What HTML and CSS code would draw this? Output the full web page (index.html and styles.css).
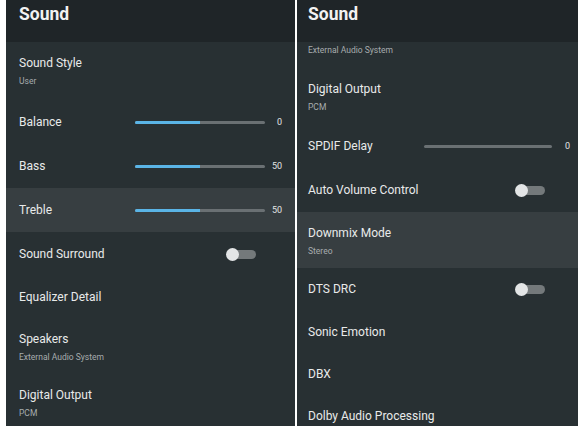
FILE: index.html
```html
<!DOCTYPE html>
<html>
<head>
<meta charset="utf-8">
<link rel="stylesheet" href="styles.css">
</head>
<body>
<div class="screen">
  <section class="panel left">
    <header class="head">Sound</header>
    <div class="list">
      <div class="items">
        <div class="row two s58"><div class="t">Sound Style</div><div class="s">User</div></div>
        <div class="row ctl"><div class="t">Balance</div><div class="track"><div class="fill" style="width:50%"></div></div><div class="val">0</div></div>
        <div class="row ctl"><div class="t">Bass</div><div class="track"><div class="fill" style="width:50%"></div></div><div class="val">50</div></div>
        <div class="row ctl hl"><div class="t">Treble</div><div class="track"><div class="fill" style="width:50%"></div></div><div class="val">50</div></div>
        <div class="row ctl"><div class="t">Sound Surround</div><div class="toggle"><span class="knob"></span></div></div>
        <div class="row one"><div class="t">Equalizer Detail</div></div>
        <div class="row two"><div class="t">Speakers</div><div class="s">External Audio System</div></div>
        <div class="row two"><div class="t">Digital Output</div><div class="s">PCM</div></div>
      </div>
    </div>
  </section>
  <section class="panel right">
    <header class="head">Sound</header>
    <div class="list">
      <div class="items">
        <div class="row partial"><div class="s">External Audio System</div></div>
        <div class="row two"><div class="t">Digital Output</div><div class="s">PCM</div></div>
        <div class="row ctl"><div class="t">SPDIF Delay</div><div class="track"><div class="fill" style="width:0%"></div></div><div class="val">0</div></div>
        <div class="row ctl"><div class="t">Auto Volume Control</div><div class="toggle"><span class="knob"></span></div></div>
        <div class="row two hl"><div class="t">Downmix Mode</div><div class="s">Stereo</div></div>
        <div class="row ctl43"><div class="t">DTS DRC</div><div class="toggle"><span class="knob"></span></div></div>
        <div class="row one"><div class="t">Sonic Emotion</div></div>
        <div class="row one"><div class="t">DBX</div></div>
        <div class="row one"><div class="t">Dolby Audio Processing</div></div>
      </div>
    </div>
  </section>
</div>
</body>
</html>
```
FILE: styles.css
```css
* { box-sizing: border-box; }
html, body { margin: 0; padding: 0; background: #ffffff; }
body { width: 582px; height: 426px; overflow: hidden; font-family: Roboto, "Liberation Sans", sans-serif; }
.screen { display: flex; gap: 2px; padding-left: 6px; height: 426px; }
.panel { display: flex; flex-direction: column; background: #283033; height: 426px; overflow: hidden; }
.panel.left { width: 289px; }
.panel.right { width: 281px; }
.head { height: 42px; flex: none; background: #1f2528; color: #f2f2f2; font-weight: 700; font-size: 17.5px; line-height: 28px; padding: 0 0 0 13px; }
.right .head { padding-left: 11px; }
.list { flex: 1; overflow: hidden; }
.items { display: flex; flex-direction: column; }
.row { display: flex; align-items: center; padding: 0 13px; color: #e8eaea; font-size: 12px; }
.right .row { padding: 0 8px 0 11px; }
.row.two { height: 56px; flex-direction: column; align-items: flex-start; justify-content: flex-start; padding-top: 14px; }
.row.s58 { height: 58px; padding-top: 14px; }
.row.partial { height: 26px; flex-direction: column; align-items: flex-start; justify-content: flex-start; padding-top: 3px; }
.row .t { line-height: 15px; }
.row .s { font-size: 8.5px; color: #a7acae; line-height: 10px; margin-top: 5px; }
.row.partial .s { margin-top: 0; }
.row.ctl { height: 44px; }
.row.ctl43 { height: 43px; }
.row.one { height: 42px; }
.row.hl { background: #373e41; }
.t { flex: none; width: 116px; white-space: nowrap; }
.track { width: 130px; height: 3px; background: #6a7073; border-radius: 2px; overflow: hidden; }
.right .track { width: 128px; }
.fill { height: 100%; background: #5ab4e6; }
.val { flex: 1; text-align: right; font-size: 9px; color: #e2e4e4; }
.toggle { margin-left: 91px; width: 30px; height: 13px; position: relative; display: flex; align-items: center; }
.toggle::before { content: ""; position: absolute; left: 8px; right: 0; top: 2px; height: 9px; border-radius: 5px; background: #74797b; }
.knob { position: relative; width: 13px; height: 13px; border-radius: 50%; background: #e3e5e6; }
```
